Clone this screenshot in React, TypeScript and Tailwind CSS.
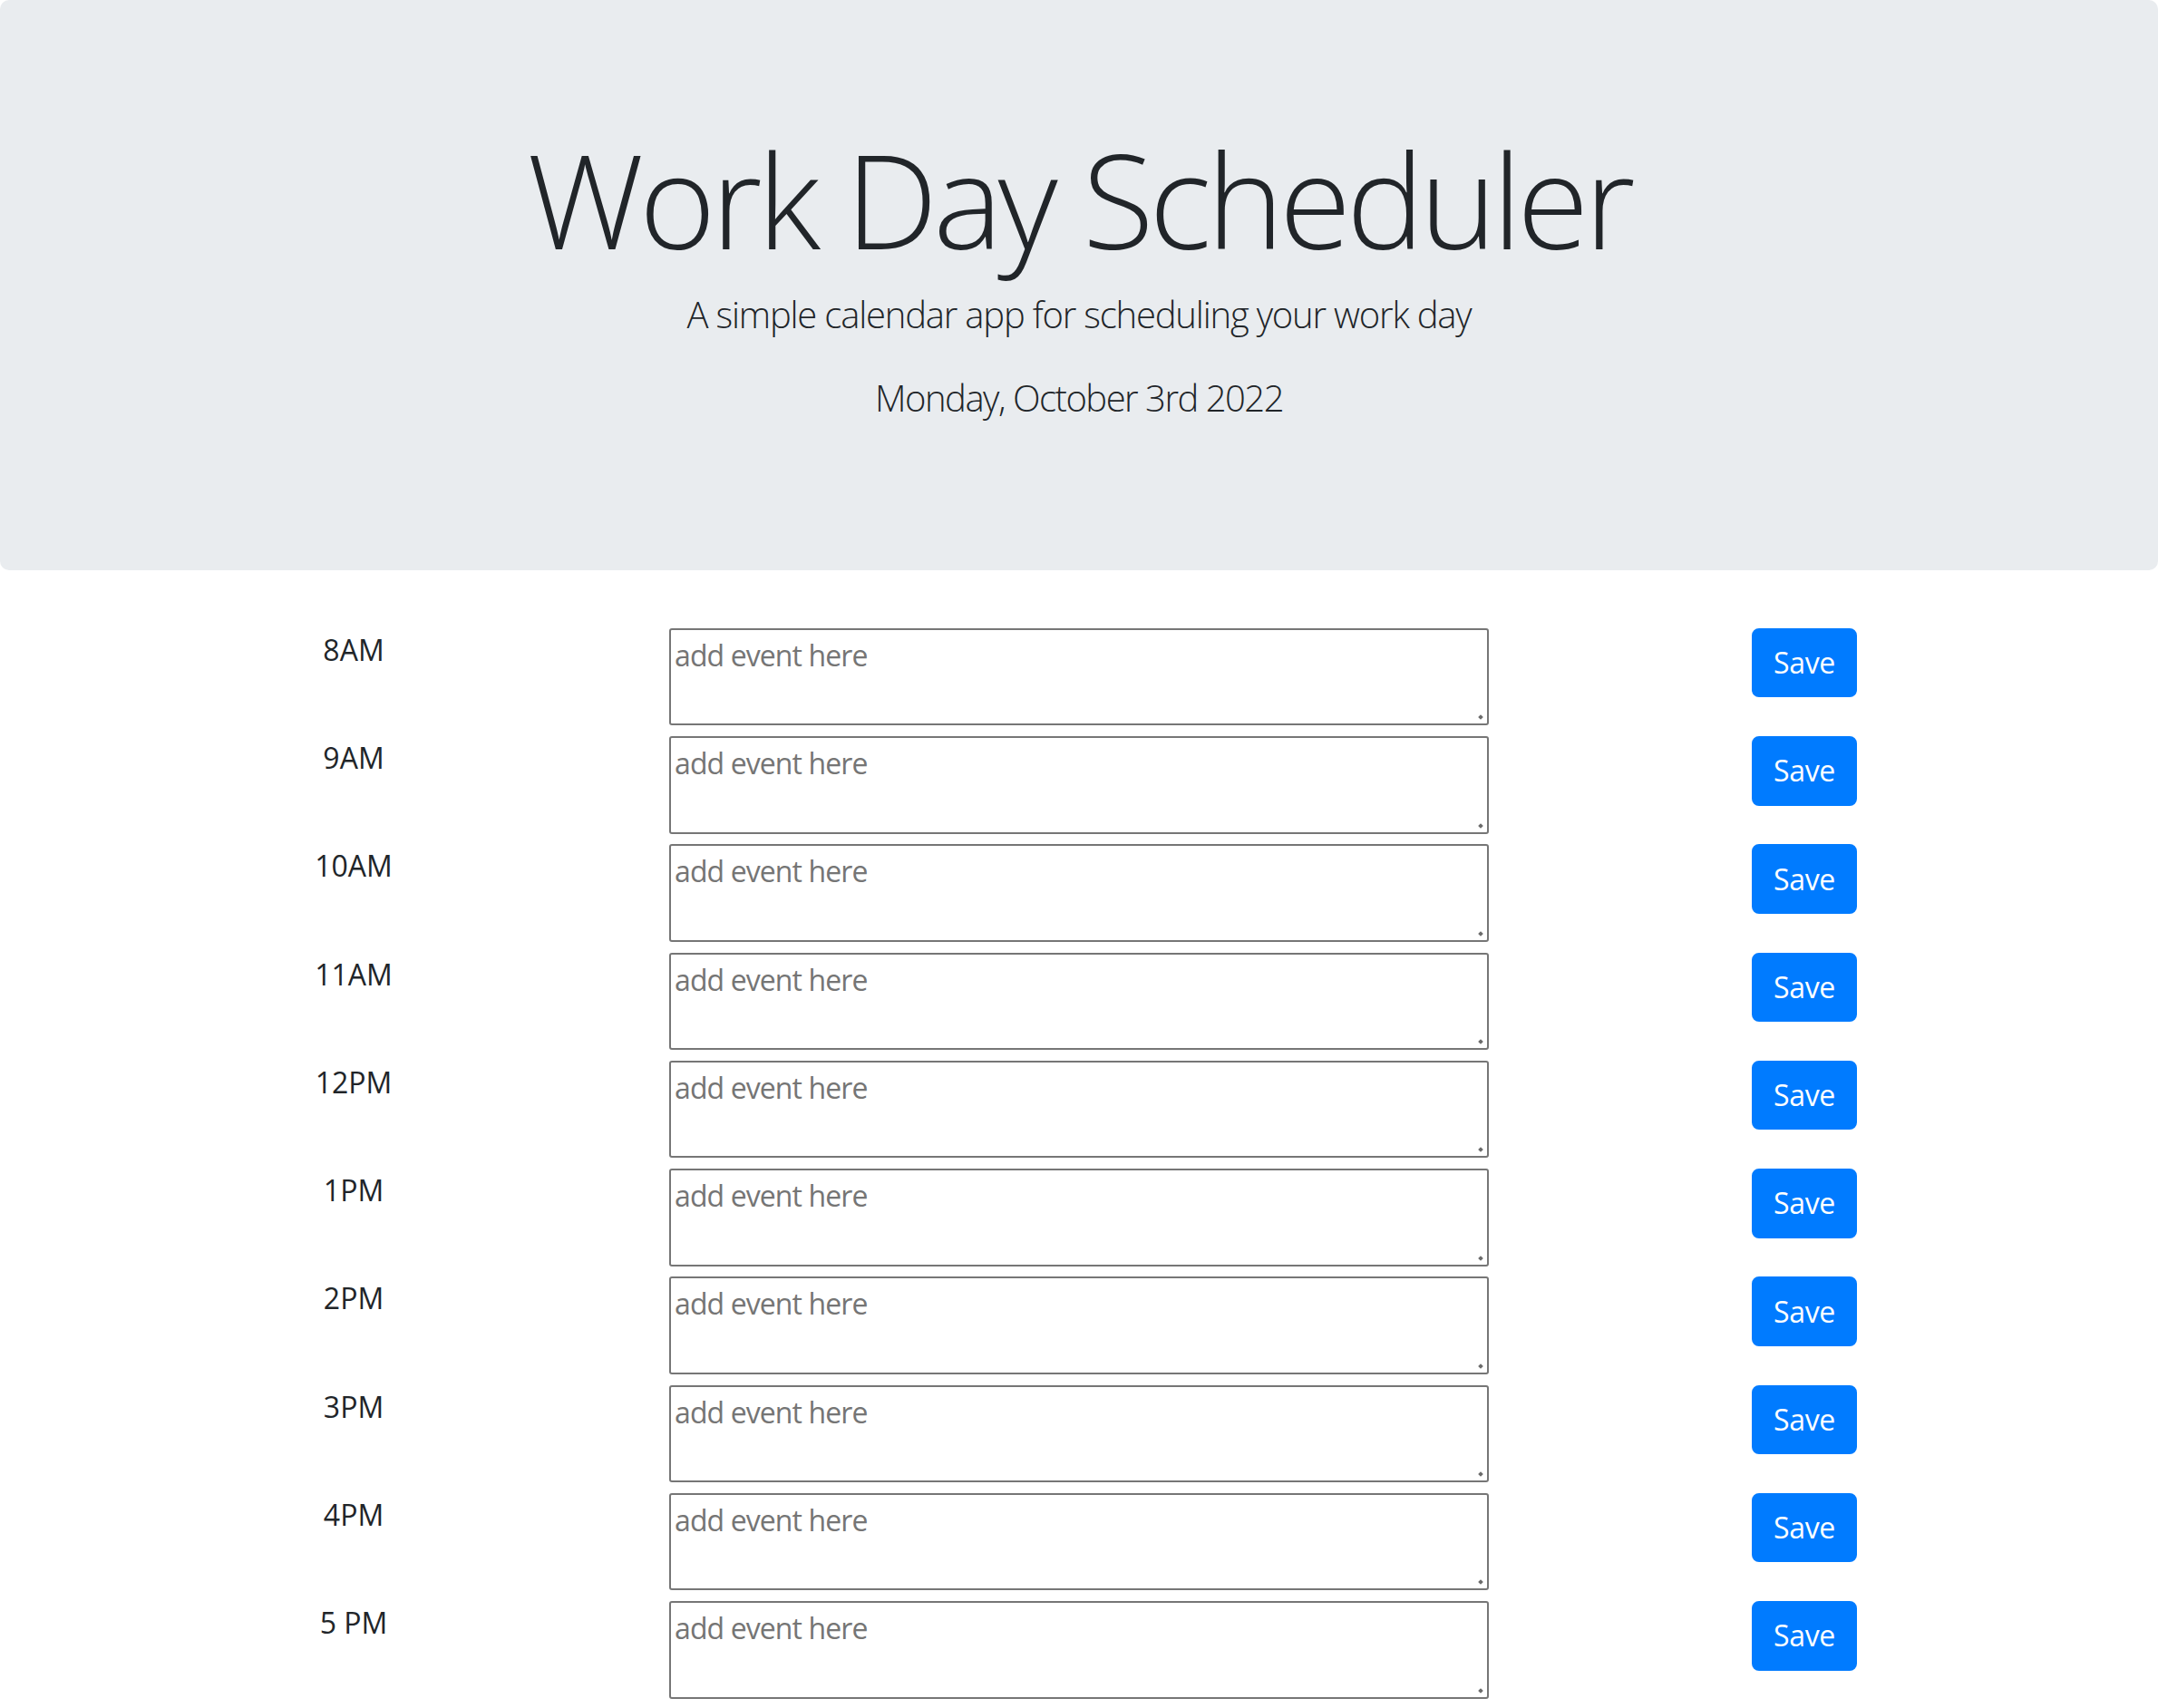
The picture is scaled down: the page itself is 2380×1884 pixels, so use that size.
const hours = ["8AM", "9AM", "10AM", "11AM", "12PM", "1PM", "2PM", "3PM", "4PM", "5 PM"]

function TimeBlock({ hour }: { hour: string }) {
  return (
    <div className="flex h-[119.25px] items-start">
      <div className="w-[320px] text-center text-[32px] leading-[48px] text-[#212529]">{hour}</div>
      <div className="flex w-[1280px] justify-center">
        <div className="relative">
          <textarea
            rows={2}
            placeholder="add event here"
            className="block h-[107.5px] w-[904px] resize-none rounded-[3px] border-2 border-[#767676] bg-white px-[4px] py-[4px] text-[32px] leading-[48px] tracking-[-0.9px] text-[#212529] placeholder:text-[#757575] focus:outline-none"
          />
          <span className="absolute right-[7px] bottom-[7px] h-[4px] w-[4px] rotate-45 bg-[#6b6b6b]" />
        </div>
      </div>
      <div className="flex w-[320px] justify-center">
        <button className="h-[76.5px] rounded-[8px] border-2 border-[#007bff] bg-[#007bff] px-[22px] text-[32px] leading-[48px] tracking-[-0.3px] text-white">
          Save
        </button>
      </div>
    </div>
  )
}

export default function App() {
  return (
    <div className="min-h-screen bg-white font-['Open_Sans','Noto_Sans',sans-serif]">
      <header className="mb-[64px] rounded-[10px] bg-[#e9ecef] px-[64px] pt-[128px] pb-[128px] text-center text-[#212529]">
        <h1 className="mt-[5px] mb-[11px] text-[144px] leading-[172.8px] font-light tracking-[-5px]">Work Day Scheduler</h1>
        <p className="mb-[32px] text-[40px] leading-[60px] font-light tracking-[-1.2px]">
          A simple calendar app for scheduling your work day
        </p>
        <p className="mb-[32px] text-[40px] leading-[60px] font-light tracking-[-1.5px]">Monday, October 3rd 2022</p>
      </header>
      <main className="mx-auto w-[1920px]">
        {hours.map((hour) => (
          <TimeBlock key={hour} hour={hour} />
        ))}
      </main>
    </div>
  )
}
